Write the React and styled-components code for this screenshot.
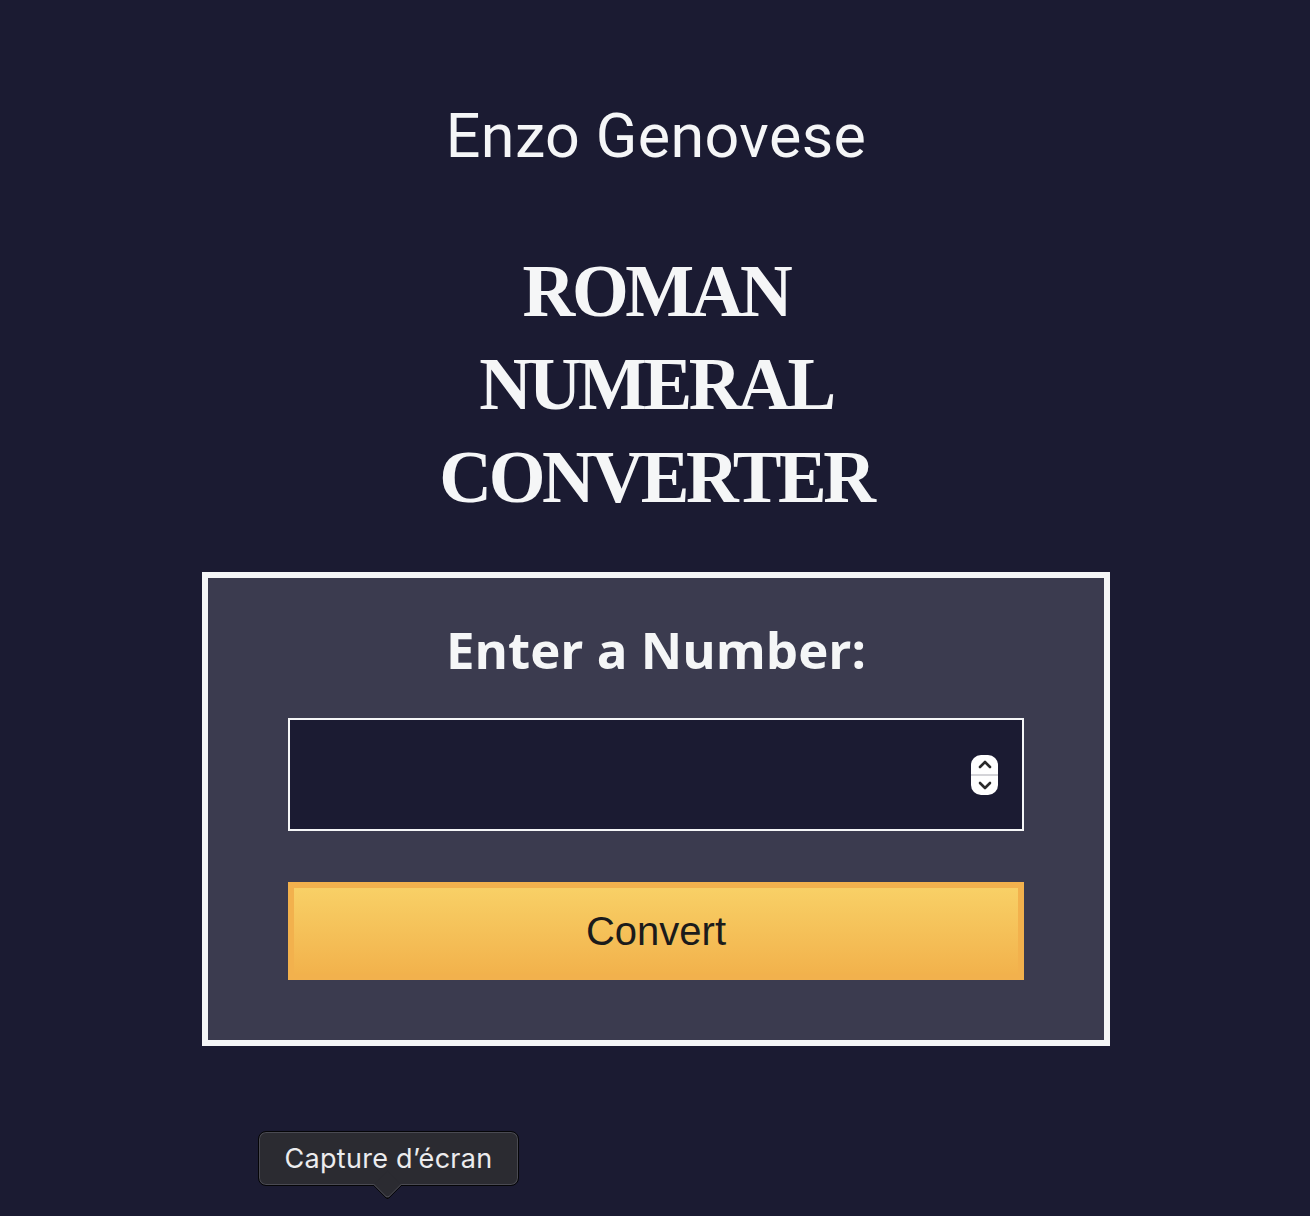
import React from "react";
import styled, { createGlobalStyle } from "styled-components";

const GlobalStyle = createGlobalStyle`
  html, body {
    margin: 0;
    padding: 0;
    background: #1b1b32;
    color: #f5f6f7;
    font-family: Roboto, "Liberation Sans", sans-serif;
  }
`;

const Page = styled.main`
  position: relative;
  min-height: 1216px;
  display: flex;
  flex-direction: column;
  align-items: center;
  padding: 100px 0 0 2px;
  box-sizing: border-box;
`;

const Author = styled.p`
  margin: 0;
  font-family: Roboto, "Liberation Sans", sans-serif;
  font-size: 61px;
  font-weight: 400;
  line-height: 72px;
  letter-spacing: 0.4px;
`;

const Title = styled.h1`
  margin: 73px 0 0;
  max-width: 520px;
  text-align: center;
  font-family: "Liberation Serif", "DejaVu Serif", serif;
  font-weight: 700;
  font-size: 73px;
  line-height: 93px;
  letter-spacing: -3.4px;
`;

const Card = styled.section`
  margin-top: 48px;
  width: 908px;
  box-sizing: border-box;
  border: 6px solid #f5f6f7;
  background: #3b3b4f;
  padding: 37px 80px 60px;
  display: flex;
  flex-direction: column;
  align-items: stretch;
`;

const Label = styled.label`
  text-align: center;
  font-family: "Open Sans", "Noto Sans", sans-serif;
  font-weight: 700;
  font-size: 51px;
  line-height: 68px;
`;

const InputWrap = styled.div`
  position: relative;
  margin-top: 35px;
`;

const NumberInput = styled.input`
  display: block;
  width: 100%;
  height: 113px;
  box-sizing: border-box;
  background: #1b1b32;
  border: 2px solid #f5f6f7;
  color: #f5f6f7;
  font-size: 36px;
  padding: 0 20px;
  outline: none;
  -moz-appearance: textfield;
  &::-webkit-inner-spin-button,
  &::-webkit-outer-spin-button {
    -webkit-appearance: none;
    margin: 0;
  }
`;

const Spinner = styled.div`
  position: absolute;
  right: 26px;
  top: 37px;
  width: 27px;
  height: 40px;
  border-radius: 10px;
  background: #ffffff;
  display: flex;
  flex-direction: column;
  align-items: center;
  justify-content: space-between;
  padding: 2px 0;
  box-sizing: border-box;
  &::after {
    content: "";
    position: absolute;
    left: 0;
    right: 0;
    top: 19px;
    height: 2px;
    background: #d4d4d8;
  }
`;

const ConvertButton = styled.button`
  margin-top: 51px;
  height: 98px;
  border: 6px solid #f2b14d;
  background-color: #f4b94f;
  background-image: linear-gradient(#f8d066, #f2b24c);
  color: #1b1b1b;
  font-family: "Liberation Sans", Arial, sans-serif;
  font-size: 40px;
  cursor: pointer;
`;

const Tooltip = styled.div`
  position: absolute;
  left: 258px;
  top: 1131px;
  width: 261px;
  height: 55px;
  box-sizing: border-box;
  border-radius: 8px;
  background: #2b2b31;
  border: 1px solid #050507;
  box-shadow: inset 0 0 0 1px #4a4a52;
  color: #ececee;
  font-family: Inter, "Noto Sans", sans-serif;
  font-size: 27px;
  letter-spacing: 0.3px;
  display: flex;
  align-items: center;
  justify-content: center;
  &::after {
    content: "";
    position: absolute;
    left: 118px;
    bottom: -11px;
    width: 20px;
    height: 20px;
    background: #2b2b31;
    border-right: 1px solid #050507;
    border-bottom: 1px solid #050507;
    box-shadow: inset -1px -1px 0 #55555d;
    transform: rotate(45deg);
    border-radius: 0 0 4px 0;
  }
`;

const Chevron = ({ up }) => (
  <svg width="18" height="14" viewBox="0 0 18 14">
    <path
      d={up ? "M4 10 L9 5 L14 10" : "M4 4 L9 9 L14 4"}
      fill="none"
      stroke="#2a2a2a"
      strokeWidth="2.6"
      strokeLinecap="round"
      strokeLinejoin="round"
    />
  </svg>
);

export default function App() {
  return (
    <>
      <GlobalStyle />
      <Page>
        <Author>Enzo Genovese</Author>
        <Title>ROMAN NUMERAL CONVERTER</Title>
        <Card>
          <Label htmlFor="number">Enter a Number:</Label>
          <InputWrap>
            <NumberInput id="number" type="number" />
            <Spinner>
              <Chevron up />
              <Chevron />
            </Spinner>
          </InputWrap>
          <ConvertButton>Convert</ConvertButton>
        </Card>
        <Tooltip>Capture d’écran</Tooltip>
      </Page>
    </>
  );
}
